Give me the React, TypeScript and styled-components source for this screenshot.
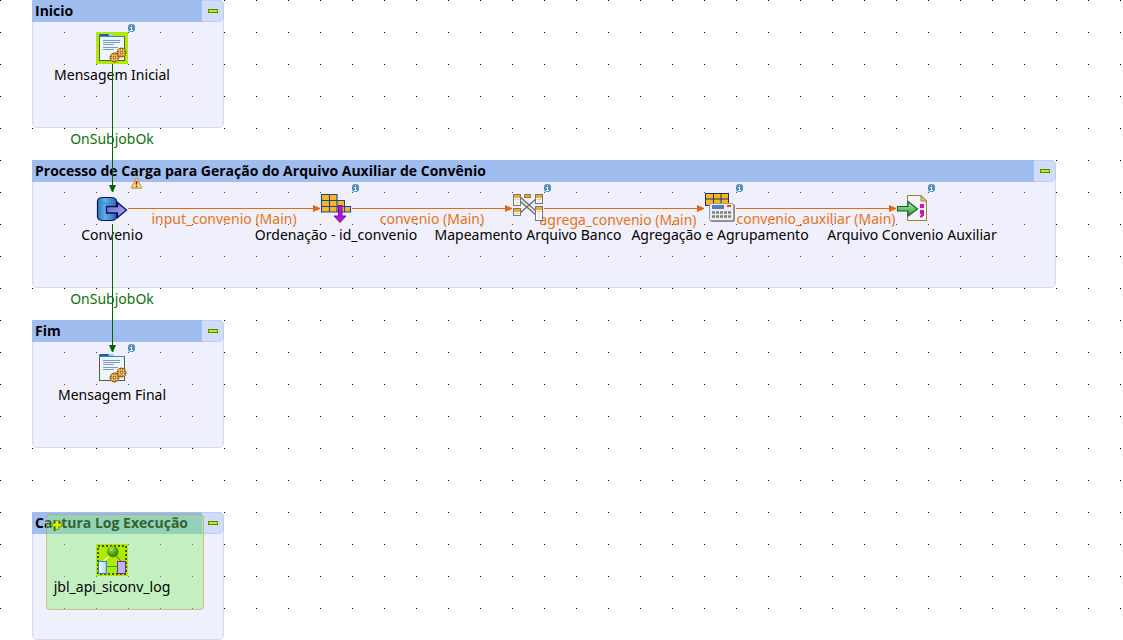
import React, { useState } from "react";
import styled, { createGlobalStyle } from "styled-components";

const GlobalStyle = createGlobalStyle`
  body {
    margin: 0;
    background: #fff;
    font-family: "Noto Sans", "Open Sans", sans-serif;
  }
`;

const Canvas = styled.main`
  position: relative;
  min-height: 640px;
  overflow: hidden;
  background-image: conic-gradient(from 270deg at 1px 1px, #000 90deg, transparent 90deg);
  background-size: 32px 32px;
  font-size: 14px;
  line-height: 20px;
`;

const Subjob = styled.section<{ $x: number; $y: number; $w: number }>`
  position: absolute;
  left: ${(p) => p.$x}px;
  top: ${(p) => p.$y}px;
  width: ${(p) => p.$w}px;
  height: 128px;
  box-sizing: border-box;
  border: 1px solid #cfdbf7;
  border-radius: 0 5px 5px 5px;
  background: rgba(213, 213, 247, 0.35);
`;

const SubjobHeader = styled.header`
  display: flex;
  height: 22px;
  margin: -1px;
`;

const SubjobTitle = styled.h2`
  flex: 1;
  margin: 0;
  padding-left: 3px;
  background: #a0bdef;
  color: #000;
  font-family: "Open Sans", "Noto Sans", sans-serif;
  font-size: 14px;
  font-weight: 700;
  line-height: 21px;
  white-space: nowrap;
`;

const Toggle = styled.button`
  display: flex;
  align-items: center;
  justify-content: center;
  width: 22px;
  padding: 0;
  border: 1px solid #b9cff5;
  border-left: 0;
  border-radius: 0 5px 5px 0;
  background: #d1dcf7;
`;

const ToggleMark = styled.span`
  width: 8px;
  height: 2px;
  border: 1px solid #5c8012;
  background: #c4f000;
`;

const Node = styled.figure<{ $x: number; $y: number }>`
  position: absolute;
  left: ${(p) => p.$x}px;
  top: ${(p) => p.$y}px;
  display: flex;
  flex-direction: column;
  align-items: center;
  gap: 1px;
  width: 32px;
  margin: 0;
`;

const IconBox = styled.div<{ $lime?: boolean }>`
  width: 32px;
  height: 32px;
  background: ${(p) => (p.$lime ? "#b0e900" : "transparent")};
  svg {
    display: block;
  }
`;

const NodeLabel = styled.figcaption`
  color: #000;
  white-space: nowrap;
`;

const Badge = styled.span<{ $warn?: boolean }>`
  position: absolute;
  left: ${(p) => (p.$warn ? 35 : 32)}px;
  top: ${(p) => (p.$warn ? -14 : -8)}px;
  svg {
    display: block;
  }
`;

const Links = styled.svg`
  position: absolute;
  left: 0;
  top: 0;
  width: 100%;
  height: 100%;
  pointer-events: none;
`;

const LinkLabel = styled.span<{ $x: number; $y: number; $green?: boolean }>`
  position: absolute;
  left: ${(p) => p.$x}px;
  top: ${(p) => p.$y}px;
  display: flex;
  justify-content: center;
  width: 0;
  color: ${(p) => (p.$green ? "#0f6e0f" : "#e8731a")};
  white-space: nowrap;
`;

const Joblet = styled.div`
  position: absolute;
  left: 46px;
  top: 514px;
  width: 158px;
  height: 96px;
  box-sizing: border-box;
  border: 1px solid rgba(210, 130, 90, 0.45);
  border-radius: 4px;
  background: rgba(130, 240, 105, 0.4);
`;

const Expand = styled.button`
  display: block;
  margin: 5px;
  padding: 0;
  border: 0;
  background: none;
  svg {
    display: block;
  }
`;

const Gear = ({ x, y }: { x: number; y: number }) => (
  <g transform={`translate(${x} ${y})`}>
    <path
      d="M-1-4.500h2v1.300l1.300-.9 1.500 1.500-.8 1.600h1.500v2H3.200l.8 1.500-1.500 1.500L1 3.200v1.300h-2V3.200l-1.500.8L-4 2.500l.8-1.500h-1.300v-2h1.500l-.8-1.600 1.500-1.500 1.300.9z"
      fill="#f7bf45"
      stroke="#84471a"
      strokeWidth=".9"
    />
    <circle r="1.300" fill="#fff" stroke="#6b3512" strokeWidth=".9" />
  </g>
);

const MessageIcon = () => (
  <svg width="32" height="32">
    <rect x="3.500" y="4.500" width="25" height="24" fill="#eaf6f8" stroke="#5d5b45" />
    <path d="M3 5V3l1-1h8l1 1v2z" fill="#1f5fb0" />
    <path d="M13 2h4l1 2h-5z" fill="#8fd0f5" />
    <path d="M3 4.500h26" stroke="#3a86d0" />
    <path d="M7 8.500h17M7 10.500h17M7 12.500h11M7 15.500h15M7 17.500h11" stroke="#8797c4" />
    <Gear x={18.5} y={25.5} />
    <Gear x={25.5} y={20.5} />
  </svg>
);

const DatabaseIcon = () => (
  <svg width="32" height="32">
    <defs>
      <linearGradient id="db" x1="0" x2="1">
        <stop offset="0" stopColor="#2d78bd" />
        <stop offset=".4" stopColor="#5db2e6" />
        <stop offset="1" stopColor="#2868a8" />
      </linearGradient>
      <linearGradient id="dbArrow" x1="0" x2="1" y1="0" y2="1">
        <stop offset="0" stopColor="#5c62c0" />
        <stop offset="1" stopColor="#b5b9ee" />
      </linearGradient>
    </defs>
    <path d="M1.500 9Q2 5.500 7 5.500h8q5 0 5.500 3.500v16q-.5 3.500-5.500 3.500H7Q2 28.500 1.500 25z" fill="url(#db)" stroke="#10105f" strokeWidth="1.200" />
    <path d="M2.500 9q1 2.500 5 2.500h7q4 0 5-2.500" fill="none" stroke="#3a86c6" />
    <path d="M10.500 14.500h11v-4l9 7.500-9 7.500v-4.500h-11z" fill="url(#dbArrow)" stroke="#0d0d6b" strokeWidth="1.300" />
  </svg>
);

const SortIcon = () => (
  <svg width="32" height="32">
    <path d="M1.500 2.500h15.500v6h7.500v6h6v5.500h-29z" fill="#fbb915" />
    <path d="M1.500 2.500h15.500v6h7.500v6h6v5.500h-29zM1.500 8.500H17M1.500 14.500h23M9.500 2.500V20M17 8.500V20M24.500 14.500V20" fill="none" stroke="#1d3fa8" strokeWidth="1.100" />
    <path d="M18.500 13.500h3.500V24h4l-6 6.500-6-6.500h4.500z" fill="#b414dc" stroke="#75109c" />
  </svg>
);

const MapTable = ({ x, y, h }: { x: number; y: number; h: number }) => (
  <g>
    <rect x={x} y={y} width="7" height={h} fill="#fbfbf6" stroke="#77777b" />
    <rect x={x + 0.5} y={y + 0.5} width="6" height="3" fill="#f7a81b" />
    <path d={`M${x + 1} ${y + 5}h5`} stroke="#c9c9c9" />
    <path d={`M${x + 3.5} ${y + 4}v${h - 5}`} stroke="#dcdcdc" />
  </g>
);

const MapIcon = () => (
  <svg width="32" height="32">
    <path d="M8 5l16 14M8 9l16 14M8 21L24 7" stroke="#6e6e6e" strokeWidth="1.400" />
    <MapTable x={1.5} y={2.5} h={11} />
    <MapTable x={1.5} y={16.5} h={7} />
    <MapTable x={23.5} y={2.5} h={9} />
    <MapTable x={23.5} y={14.5} h={14} />
    <rect x="12.500" y="2.500" width="6" height="3" fill="#f7a81b" stroke="#8a7a55" />
  </svg>
);

const AggregateIcon = () => (
  <svg width="32" height="32">
    <rect x="1.500" y="1.500" width="23" height="12" fill="#fdb813" stroke="#1b2d8f" />
    <path d="M9.500 1.500v12M17 1.500v12M1.500 7h23" stroke="#1b2d8f" />
    <rect x="6" y="12" width="25" height="18" rx="2" fill="#8d8d8d" />
    <rect x="5.500" y="11.500" width="24" height="17" rx="2" fill="#ececec" stroke="#9a9a9a" />
    <rect x="8" y="13" width="12" height="4" fill="#4f82c4" />
    <rect x="23" y="13" width="4" height="2" fill="#e3452f" />
    <path d="M8 20.500h19M8 24.500h19" stroke="#7f7f7f" strokeWidth="2.400" strokeDasharray="3 1" />
  </svg>
);

const OutputIcon = () => (
  <svg width="32" height="32">
    <defs>
      <linearGradient id="out" x1="0" x2="0" y1="0" y2="1">
        <stop offset="0" stopColor="#a9e8a0" />
        <stop offset="1" stopColor="#2fa63c" />
      </linearGradient>
    </defs>
    <path d="M11.500 3.500H25l5.500 5.500v19.500h-19z" fill="#f4f3fa" stroke="#9a7f35" />
    <path d="M25 3.500V9h5.500z" fill="#e7c377" stroke="#9a7f35" />
    <path d="M1.500 14.500H12v-5l9.500 7.500-9.500 7v-5H1.500z" fill="url(#out)" stroke="#1b5e28" strokeWidth="1.200" />
    <path d="M24 12h4v4h-4zM24 18h4v5.500l-2 2h-2v-1.500l1.500-2H24z" fill="#cf10b5" />
  </svg>
);

const JobletIcon = () => (
  <svg width="32" height="32">
    <defs>
      <radialGradient id="ball" cx=".4" cy=".3" r=".7">
        <stop offset="0" stopColor="#b4e858" />
        <stop offset=".5" stopColor="#5fb010" />
        <stop offset="1" stopColor="#347a05" />
      </radialGradient>
      <linearGradient id="page" x1="0" x2="1">
        <stop offset="0" stopColor="#fff" />
        <stop offset="1" stopColor="#b9c8ee" />
      </linearGradient>
    </defs>
    <rect x="2" y="2" width="28" height="28" fill="none" stroke="#4b4f12" strokeWidth="2" strokeDasharray="2 2" />
    <path d="M13 12l-6 6" stroke="#e8f5c8" strokeWidth="1.500" />
    <path d="M20 12l5 5" stroke="#69a010" strokeWidth="1.200" />
    <path d="M11 22.500h10" stroke="#00b81c" />
    <circle cx="16.700" cy="7.500" r="5.700" fill="url(#ball)" />
    <rect x="2.500" y="17.500" width="8" height="12" fill="url(#page)" stroke="#1b8be0" />
    <rect x="21.500" y="17.500" width="8" height="12" fill="#bcb6ee" stroke="#7b1fb8" />
  </svg>
);

const InfoMark = () => (
  <svg width="7" height="8" role="img" aria-label="info">
    <rect width="7" height="8" rx="3" fill="#5590bd" />
    <path d="M3 1h1v1H3zM2 3h2v3h1v1H2V6h1V4H2z" fill="#e8f2fa" />
  </svg>
);

const WarnMark = () => (
  <svg width="11" height="11" role="img" aria-label="warning">
    <path d="M4.500 .8h2L7.500 4l2.700 4.500v1.700H.8V8.500L3.500 4z" fill="#fbe0a0" stroke="#dc922f" strokeLinejoin="round" strokeWidth="1.200" />
    <path d="M4.700 3h1.600v3.700H4.700zM4.700 7.800h1.600v1.400H4.700z" fill="#5a3a10" />
  </svg>
);

const SUBJOBS = [
  { title: "Inicio", x: 32, y: 0, w: 192 },
  { title: "Processo de Carga para Geração do Arquivo Auxiliar de Convênio", x: 32, y: 160, w: 1024 },
  { title: "Fim", x: 32, y: 320, w: 192 },
  { title: "Captura Log Execução", x: 32, y: 512, w: 192 },
];

type NodeData = {
  label: string;
  x: number;
  y: number;
  Icon: () => React.JSX.Element;
  badge?: "info" | "warn";
  lime?: boolean;
};

const NODES: NodeData[] = [
  { label: "Mensagem Inicial", x: 96, y: 32, Icon: MessageIcon, badge: "info", lime: true },
  { label: "Convenio", x: 96, y: 192, Icon: DatabaseIcon, badge: "warn" },
  { label: "Ordenação - id_convenio", x: 320, y: 192, Icon: SortIcon, badge: "info" },
  { label: "Mapeamento Arquivo Banco", x: 512, y: 192, Icon: MapIcon, badge: "info" },
  { label: "Agregação e Agrupamento", x: 704, y: 192, Icon: AggregateIcon, badge: "info" },
  { label: "Arquivo Convenio Auxiliar", x: 896, y: 192, Icon: OutputIcon, badge: "info" },
  { label: "Mensagem Final", x: 96, y: 352, Icon: MessageIcon, badge: "info" },
  { label: "jbl_api_siconv_log", x: 96, y: 544, Icon: JobletIcon, lime: true },
];

const LINK_LABELS = [
  { text: "OnSubjobOk", x: 112, y: 129, green: true },
  { text: "OnSubjobOk", x: 112, y: 289, green: true },
  { text: "input_convenio (Main)", x: 224, y: 209 },
  { text: "convenio (Main)", x: 432, y: 209 },
  { text: "agrega_convenio (Main)", x: 618, y: 210 },
  { text: "convenio_auxiliar (Main)", x: 816, y: 209 },
];

const FLOWS = [
  [128, 320],
  [352, 512],
  [544, 704],
  [736, 896],
];

export default function App() {
  const [closed, setClosed] = useState<string[]>([]);
  const toggle = (t: string) =>
    setClosed((c) => (c.includes(t) ? c.filter((v) => v !== t) : [...c, t]));

  return (
    <Canvas>
      <GlobalStyle />
      {SUBJOBS.map((s) => (
        <Subjob key={s.title} $x={s.x} $y={s.y} $w={s.w}>
          <SubjobHeader>
            <SubjobTitle>{s.title}</SubjobTitle>
            <Toggle
              type="button"
              aria-label={`Collapse ${s.title}`}
              aria-expanded={!closed.includes(s.title)}
              onClick={() => toggle(s.title)}
            >
              <ToggleMark />
            </Toggle>
          </SubjobHeader>
        </Subjob>
      ))}
      <Joblet>
        <Expand type="button" aria-label="Expand joblet">
          <svg width="10" height="10">
            <path d="M3.500 .5h3v3h3v3h-3v3h-3v-3h-3v-3h3z" fill="#d4f500" stroke="#7fa800" />
          </svg>
        </Expand>
      </Joblet>
      {LINK_LABELS.map((l, i) => (
        <LinkLabel key={i} $x={l.x} $y={l.y} $green={l.green}>
          {l.text}
        </LinkLabel>
      ))}
      {NODES.map(({ label, x, y, Icon, badge, lime }) => (
        <Node key={label} $x={x} $y={y}>
          <IconBox $lime={lime}>
            <Icon />
          </IconBox>
          <NodeLabel>{label}</NodeLabel>
          {badge && (
            <Badge $warn={badge === "warn"}>{badge === "warn" ? <WarnMark /> : <InfoMark />}</Badge>
          )}
        </Node>
      ))}
      <Links aria-hidden="true">
        {[64, 224].map((y) => (
          <g key={y}>
            <path d={`M112.500 ${y}V${y + 122}`} stroke="#006400" />
            <path d={`M109 ${y + 121}h7l-3 7h-1z`} fill="#006400" />
          </g>
        ))}
        {FLOWS.map(([a, b]) => (
          <g key={a}>
            <path d={`M${a} 208.500H${b - 6}`} stroke="#e06c10" />
            <path d={`M${b - 7} 205v7l7-3v-1z`} fill="#e8640a" />
          </g>
        ))}
      </Links>
    </Canvas>
  );
}
